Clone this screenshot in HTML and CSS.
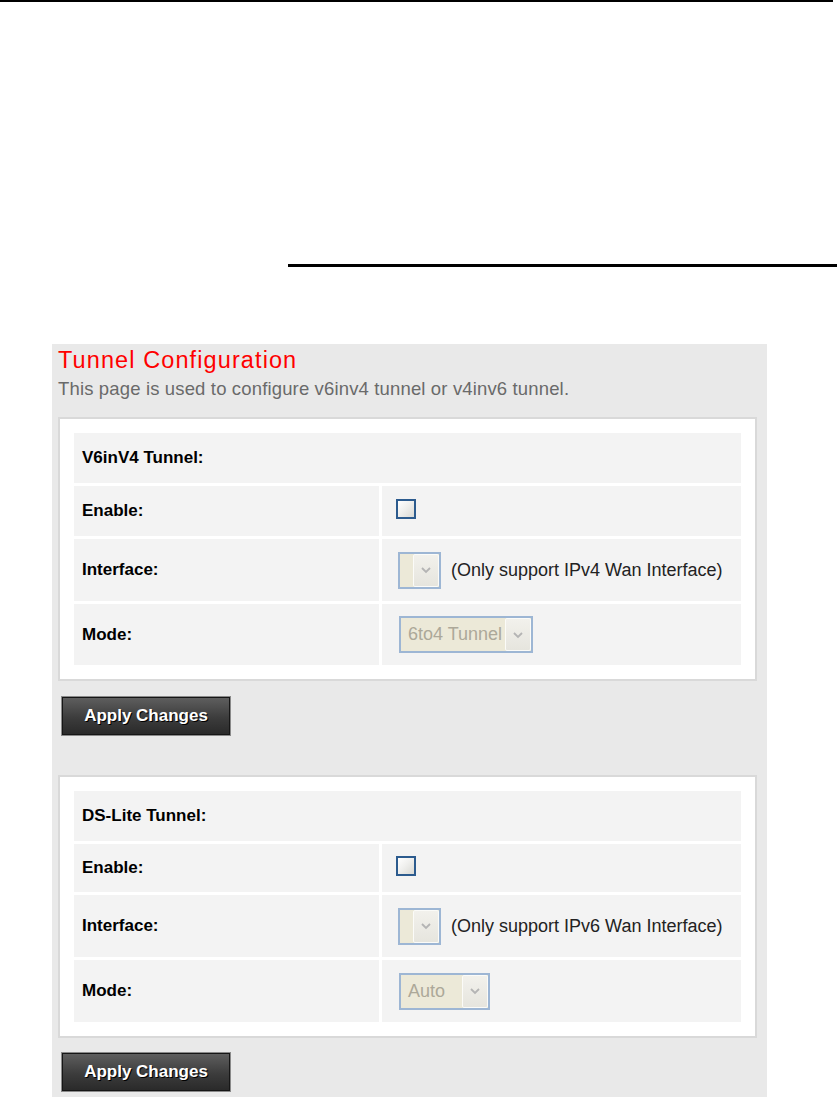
FILE: index.html
```html
<!DOCTYPE html>
<html>
<head>
<meta charset="utf-8">
<title>Tunnel Configuration</title>
<link rel="stylesheet" href="styles.css">
</head>
<body>
<div class="rule-top"></div>
<div class="rule-thick"></div>
<div class="panel">
  <h1 class="title">Tunnel Configuration</h1>
  <p class="desc">This page is used to configure v6inv4 tunnel or v4inv6 tunnel.</p>

  <div class="box">
    <div class="grid">
      <div class="cell head">V6inV4 Tunnel:</div>
      <div class="cell label r-check">Enable:</div>
      <div class="cell value r-check"><span class="checkbox"></span></div>
      <div class="cell label r-sel">Interface:</div>
      <div class="cell value r-sel">
        <span class="select sel-empty"><span class="val"></span><span class="btn"><svg width="12" height="8" viewBox="0 0 12 8"><path d="M2 2 L6 6 L10 2" fill="none" stroke="#b4b4b4" stroke-width="1.8"/></svg></span></span>
        <span class="note">(Only support IPv4 Wan Interface)</span>
      </div>
      <div class="cell label r-sel2">Mode:</div>
      <div class="cell value r-sel2">
        <span class="select sel-wide"><span class="val">6to4 Tunnel</span><span class="btn"><svg width="12" height="8" viewBox="0 0 12 8"><path d="M2 2 L6 6 L10 2" fill="none" stroke="#b4b4b4" stroke-width="1.8"/></svg></span></span>
      </div>
    </div>
  </div>
  <button class="apply" type="button">Apply Changes</button>

  <div class="box box2">
    <div class="grid">
      <div class="cell head">DS-Lite Tunnel:</div>
      <div class="cell label r-check2">Enable:</div>
      <div class="cell value r-check2"><span class="checkbox"></span></div>
      <div class="cell label r-sel">Interface:</div>
      <div class="cell value r-sel">
        <span class="select sel-empty"><span class="val"></span><span class="btn"><svg width="12" height="8" viewBox="0 0 12 8"><path d="M2 2 L6 6 L10 2" fill="none" stroke="#b4b4b4" stroke-width="1.8"/></svg></span></span>
        <span class="note">(Only support IPv6 Wan Interface)</span>
      </div>
      <div class="cell label r-sel">Mode:</div>
      <div class="cell value r-sel">
        <span class="select sel-auto"><span class="val">Auto</span><span class="btn"><svg width="12" height="8" viewBox="0 0 12 8"><path d="M2 2 L6 6 L10 2" fill="none" stroke="#b4b4b4" stroke-width="1.8"/></svg></span></span>
      </div>
    </div>
  </div>
  <button class="apply apply2" type="button">Apply Changes</button>
</div>
</body>
</html>
```

FILE: styles.css
```css
html, body {
  margin: 0;
  padding: 0;
  background: #ffffff;
  font-family: "Liberation Sans", Arial, sans-serif;
}

.rule-top {
  width: 833px;
  height: 2px;
  background: #000;
}

.rule-thick {
  margin: 262px 0 0 288px;
  height: 3px;
  background: #000;
}

.panel {
  margin: 77px 0 0 52px;
  width: 699px;
  padding: 3px 10px 12px 6px;
  background: #e9e9e9;
}

.title {
  margin: 0;
  font-size: 23.5px;
  line-height: 26px;
  font-weight: normal;
  letter-spacing: 1.1px;
  color: #ff0000;
}

.desc {
  margin: 5px 0 0 0;
  font-size: 18.5px;
  line-height: 22px;
  letter-spacing: 0.15px;
  color: #6a6a6a;
}

.box {
  margin-top: 17px;
  background: #ffffff;
  border: 2px solid #d9d9d9;
  padding: 14px;
}

.box2 {
  margin-top: 40px;
}

.grid {
  display: grid;
  grid-template-columns: 305px 1fr;
  gap: 3px;
}

.cell {
  background: #f3f3f3;
  display: flex;
  align-items: center;
  box-sizing: border-box;
}

.head {
  grid-column: 1 / 3;
  height: 50px;
  padding-left: 8px;
  font-weight: bold;
  font-size: 17px;
  color: #000;
}

.label {
  padding-left: 8px;
  font-weight: bold;
  font-size: 17px;
  color: #000;
}

.r-check { height: 50px; }
.r-check2 { height: 48px; }
.r-sel { height: 62px; }
.r-sel2 { height: 61px; }

.value {
  padding-left: 14px;
}

.checkbox {
  display: block;
  width: 16px;
  height: 16px;
  margin-top: -5px;
  border: 2px solid #2c5b8e;
  background: linear-gradient(135deg, #ffffff 0%, #f0f0ee 45%, #d9d9d4 100%);
}

.select {
  display: flex;
  box-sizing: border-box;
  height: 37px;
  margin-left: 2px;
  border: 2px solid #9db6d4;
  background: #ece9d8;
}

.sel-empty { width: 43px; }
.sel-wide { width: 134px; margin-left: 3px; }
.sel-auto { width: 91px; margin-left: 3px; }

.select .val {
  flex: 1;
  overflow: hidden;
  white-space: nowrap;
  padding-left: 7px;
  font-size: 18px;
  line-height: 33px;
  color: #aca899;
}

.select .btn {
  width: 26px;
  height: 33px;
  box-sizing: border-box;
  border: 1px solid #fbfbf8;
  border-radius: 2px;
  background: linear-gradient(#f2f1ec, #e6e5de);
  display: flex;
  align-items: center;
  justify-content: center;
}

.note {
  margin-left: 10px;
  font-size: 18px;
  color: #222;
}

.apply {
  display: block;
  margin: 16px 0 0 4px;
  width: 168px;
  height: 38px;
  padding: 0;
  border: 1px solid #161616;
  box-shadow: 0 0 0 1px #8a8a8a;
  background: linear-gradient(#5e5e5e, #3c3c3c 55%, #2a2a2a);
  color: #ffffff;
  font-family: "Liberation Sans", Arial, sans-serif;
  font-weight: bold;
  font-size: 17px;
  text-shadow: 1px 1px 0 #000;
}

.apply2 {
  margin-top: 15px;
}
```
